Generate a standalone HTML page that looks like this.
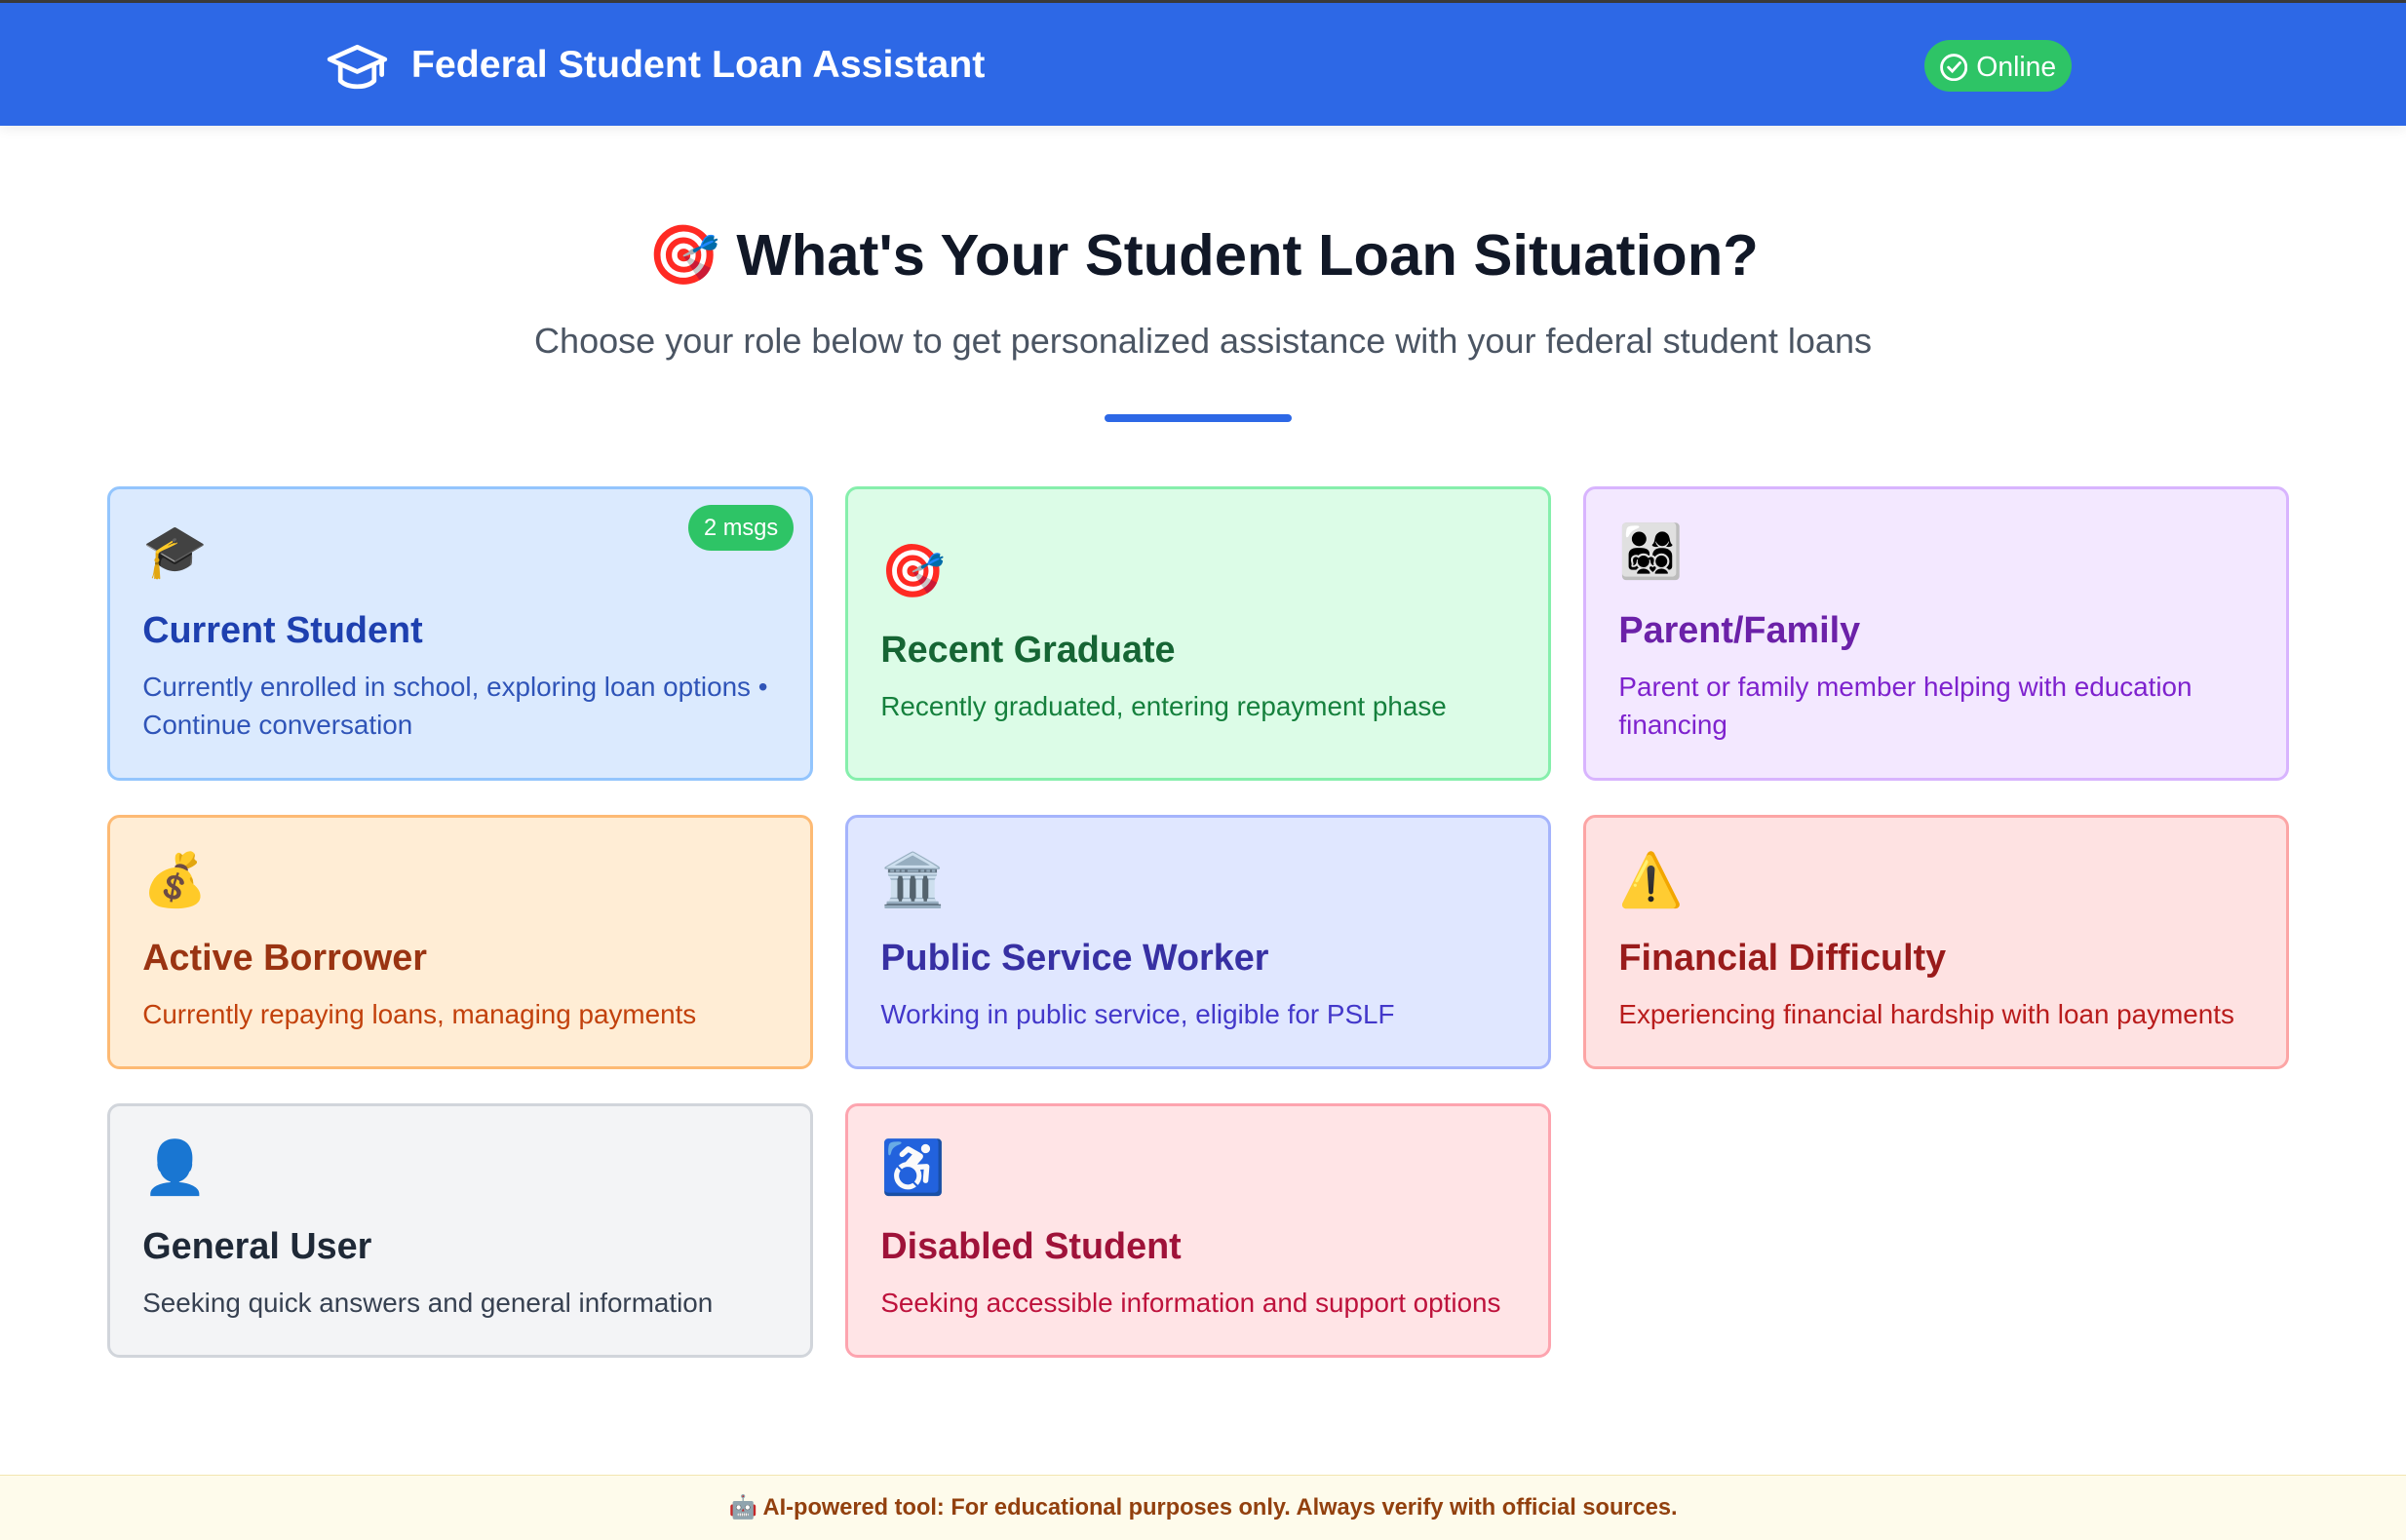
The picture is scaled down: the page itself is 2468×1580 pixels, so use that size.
<!DOCTYPE html>
<html><head><meta charset="utf-8"><style>
html,body{margin:0;padding:0}
body{width:1568px;height:1003px;zoom:1.574;overflow:hidden;background:#fff;font-family:"Liberation Sans","DejaVu Sans",sans-serif;position:relative}
.top{height:2px;background:#3b3b3b}
.hdr{height:80px;background:#2d68e6;position:relative;box-shadow:0 2px 8px rgba(0,0,0,.08)}
.hdr .t{position:absolute;left:268px;top:26px;color:#fff;font-weight:bold;font-size:25px}
.hdr svg{position:absolute;left:213px;top:25px}
.pill{position:absolute;left:1254px;top:24px;width:96px;height:34px;border-radius:17px;background:#2ec466;color:#fff;font-size:18px;line-height:36px}
.pill svg{left:10px;top:9px}
.pill span{position:absolute;left:34px}
h1{position:absolute;left:0;right:0;top:144px;margin:0;text-align:center;font-size:38px;color:#111827}
.sub{position:absolute;left:0;right:0;top:209px;text-align:center;font-size:22.9px;color:#4b5563}
.bar{position:absolute;left:720px;top:270px;width:122px;height:5px;border-radius:3px;background:#2d68e6}
.card{position:absolute;border:2px solid;border-radius:8px;display:flex;flex-direction:column;justify-content:center;padding:0 18px 0 21px;box-sizing:border-box;width:460px}
.card .i{font-size:34px;line-height:40px;height:40px;font-family:"Noto Color Emoji","DejaVu Sans",sans-serif}
.card .h{font-size:24px;font-weight:bold;margin-top:17px}
.card .d{font-size:17.7px;line-height:25px;margin-top:10px}
.badge{position:absolute;right:11px;top:10px;background:#2ec466;color:#fff;font-size:15px;padding:0 10px;height:30px;line-height:31px;border-radius:15px}
.foot{position:absolute;left:0;right:0;top:961px;height:42px;background:#fefbeb;border-top:1px solid #f3e6b0;text-align:center;font-size:15px;font-weight:bold;color:#92400e;line-height:42px}
</style></head><body>
<div class="top"></div>
<div class="hdr">
<svg width="40" height="34" viewBox="0 0 40 34" fill="none" stroke="#fff" stroke-width="3" stroke-linejoin="round" stroke-linecap="round"><path d="M2 12 L20 4 L38 12 L20 20 Z"/><path d="M9 16 V26 C14 31 26 31 31 26 V16"/><path d="M36 13 V22"/></svg>
<div class="t">Federal Student Loan Assistant</div>
<div class="pill"><svg width="18" height="18" viewBox="0 0 18 18" fill="none" stroke="#fff" stroke-width="1.8" stroke-linecap="round"><circle cx="9" cy="9" r="8"/><path d="M5.5 9 L8 11.5 L13 6"/></svg><span>Online</span></div>
</div>
<h1>🎯 What's Your Student Loan Situation?</h1>
<div class="sub">Choose your role below to get personalized assistance with your federal student loans</div>
<div class="bar"></div>

<div class="card" style="left:70px;top:317px;height:192px;background:#dbeafe;border-color:#93c5fd"><div class="badge">2 msgs</div><div class="i">🎓</div><div class="h" style="color:#1e40af">Current Student</div><div class="d" style="color:#2f54b8">Currently enrolled in school, exploring loan options • Continue conversation</div></div>
<div class="card" style="left:551px;top:317px;height:192px;background:#dcfce7;border-color:#86efac"><div class="i">🎯</div><div class="h" style="color:#166534">Recent Graduate</div><div class="d" style="color:#15803d">Recently graduated, entering repayment phase</div></div>
<div class="card" style="left:1032px;top:317px;height:192px;background:#f3e8ff;border-color:#d8b4fe"><div class="i">👨‍👩‍👧‍👦</div><div class="h" style="color:#6b21a8">Parent/Family</div><div class="d" style="color:#7e22ce">Parent or family member helping with education financing</div></div>

<div class="card" style="left:70px;top:531px;height:166px;background:#ffedd5;border-color:#fdba74"><div class="i">💰</div><div class="h" style="color:#9a3412">Active Borrower</div><div class="d" style="color:#c2410c">Currently repaying loans, managing payments</div></div>
<div class="card" style="left:551px;top:531px;height:166px;background:#e0e7ff;border-color:#a5b4fc"><div class="i">🏛️</div><div class="h" style="color:#3730a3">Public Service Worker</div><div class="d" style="color:#4338ca">Working in public service, eligible for PSLF</div></div>
<div class="card" style="left:1032px;top:531px;height:166px;background:#fee2e2;border-color:#fca5a5"><div class="i">⚠️</div><div class="h" style="color:#991b1b">Financial Difficulty</div><div class="d" style="color:#b91c1c">Experiencing financial hardship with loan payments</div></div>

<div class="card" style="left:70px;top:719px;height:166px;background:#f3f4f6;border-color:#d1d5db"><div class="i">👤</div><div class="h" style="color:#1f2937">General User</div><div class="d" style="color:#374151">Seeking quick answers and general information</div></div>
<div class="card" style="left:551px;top:719px;height:166px;background:#ffe4e6;border-color:#fda4af"><div class="i">♿</div><div class="h" style="color:#9f1239">Disabled Student</div><div class="d" style="color:#be123c">Seeking accessible information and support options</div></div>

<div class="foot">🤖 AI-powered tool: For educational purposes only. Always verify with official sources.</div>
</body></html>
